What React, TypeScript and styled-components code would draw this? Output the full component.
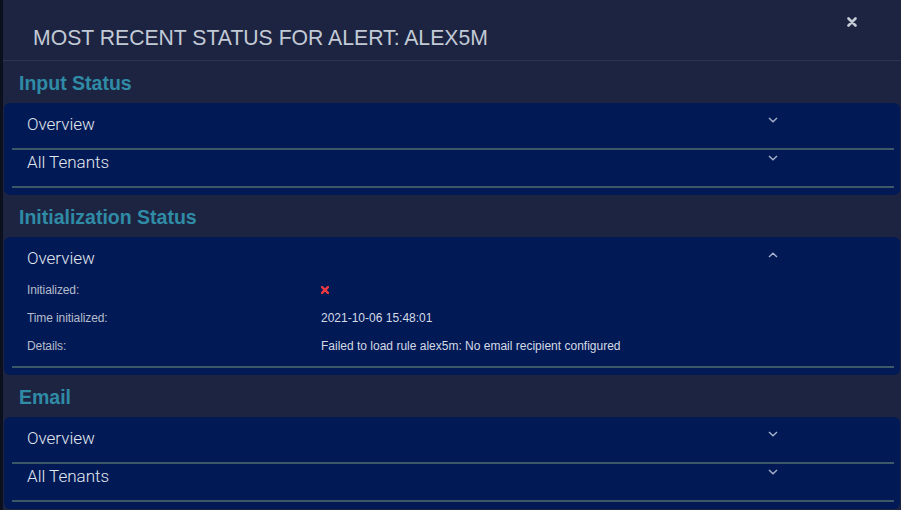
import React from "react";
import styled, { createGlobalStyle } from "styled-components";

const Global = createGlobalStyle`
  html, body { margin: 0; padding: 0; }
  body {
    background: #0c0f1d;
    overflow: hidden;
    font-family: "Liberation Sans", Arial, sans-serif;
  }
`;

const Page = styled.div`
  width: 901px;
  height: 510px;
  overflow: hidden;
  display: flex;
`;

const Modal = styled.div`
  margin-left: 3px;
  width: 898px;
  flex-shrink: 0;
  background: #1d2441;
  display: flex;
  flex-direction: column;
`;

const Header = styled.div`
  height: 61px;
  flex-shrink: 0;
  box-sizing: border-box;
  border-bottom: 1px solid #2d3451;
  display: flex;
  justify-content: space-between;
  align-items: flex-start;
  padding: 0 44px 0 30px;
`;

const Title = styled.h1`
  margin: 27px 0 0;
  font-size: 21.2px;
  line-height: 22px;
  font-weight: 400;
  color: #c2cad6;
`;

const CloseButton = styled.button`
  margin-top: 17px;
  padding: 0;
  border: none;
  background: none;
  width: 10px;
  height: 10px;
  display: flex;
  cursor: pointer;
`;

const SectionTitle = styled.h2`
  margin: 0;
  padding-left: 16px;
  height: 42px;
  flex-shrink: 0;
  line-height: 44px;
  font-size: 19.5px;
  font-weight: 700;
  color: #2f8ba6;
`;

const Card = styled.div`
  margin: 0 1px;
  flex-shrink: 0;
  background: #011a56;
  border-radius: 6px;
  padding: 9px 6px 7px 8px;
`;

const Row = styled.div`
  border-bottom: 2px solid #3a5868;
`;

const RowHead = styled.div`
  display: flex;
  align-items: center;
  padding: 0 0 12px 15px;
`;

const RowTitle = styled.div`
  flex: 1;
  font-family: Roboto, "Liberation Sans", sans-serif;
  font-weight: 300;
  font-size: 17px;
  line-height: 24px;
  color: #e3e7ef;
`;

const ChevronBox = styled.div<{ $up?: boolean }>`
  width: 10px;
  height: 6px;
  margin-right: 116px;
  margin-top: ${(p) => (p.$up ? "-6px" : "-8px")};
  display: flex;
`;

const Details = styled.div`
  display: grid;
  grid-template-columns: 294px 1fr;
  grid-auto-rows: 28px;
  align-items: center;
  padding: 0 0 6px 15px;
  margin-top: -6px;
`;

const Label = styled.div`
  font-size: 12px;
  color: #b7bccb;
  letter-spacing: -0.1px;
`;

const Value = styled.div`
  font-size: 12px;
  color: #d5d9e5;
`;

const Chevron = ({ up }: { up?: boolean }) => (
  <ChevronBox $up={up}>
    <svg width="10" height="6" viewBox="0 0 10 6">
      <polyline
        points={up ? "1,5 5,1.2 9,5" : "1,1 5,4.8 9,1"}
        fill="none"
        stroke="#a8b2cc"
        strokeWidth="1.4"
      />
    </svg>
  </ChevronBox>
);

const RedX = () => (
  <svg width="8" height="8" viewBox="0 0 8 8" style={{ display: "block" }}>
    <path d="M1.1 1.1 L6.9 6.9 M6.9 1.1 L1.1 6.9" stroke="#ee3a3f" strokeWidth="2.4" strokeLinecap="round" />
  </svg>
);

const AccordionItem = ({ title, open, children }: { title: string; open?: boolean; children?: React.ReactNode }) => (
  <Row>
    <RowHead>
      <RowTitle>{title}</RowTitle>
      <Chevron up={open} />
    </RowHead>
    {open && children}
  </Row>
);

export default function App() {
  return (
    <>
      <Global />
      <Page>
        <Modal>
          <Header>
            <Title>MOST RECENT STATUS FOR ALERT: ALEX5M</Title>
            <CloseButton aria-label="close">
              <svg width="10" height="10" viewBox="0 0 10 10">
                <path d="M1.5 1.5 L8.5 8.5 M8.5 1.5 L1.5 8.5" stroke="#c5ccd6" strokeWidth="2.6" strokeLinecap="round" />
              </svg>
            </CloseButton>
          </Header>

          <SectionTitle>Input Status</SectionTitle>
          <Card>
            <AccordionItem title="Overview" />
            <AccordionItem title="All Tenants" />
          </Card>

          <SectionTitle>Initialization Status</SectionTitle>
          <Card>
            <AccordionItem title="Overview" open>
              <Details>
                <Label>Initialized:</Label>
                <Value>
                  <RedX />
                </Value>
                <Label>Time initialized:</Label>
                <Value>2021-10-06 15:48:01</Value>
                <Label>Details:</Label>
                <Value>Failed to load rule alex5m: No email recipient configured</Value>
              </Details>
            </AccordionItem>
          </Card>

          <SectionTitle>Email</SectionTitle>
          <Card>
            <AccordionItem title="Overview" />
            <AccordionItem title="All Tenants" />
          </Card>
        </Modal>
      </Page>
    </>
  );
}
